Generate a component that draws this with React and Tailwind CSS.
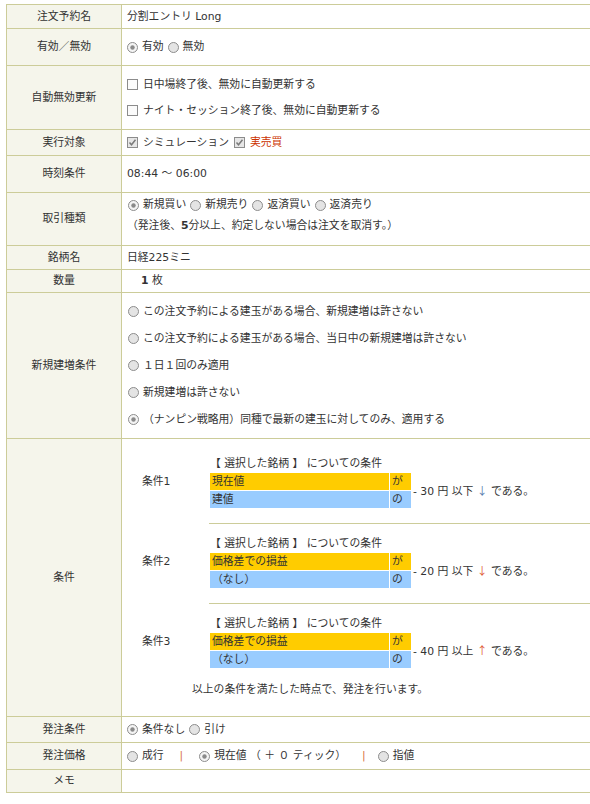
import React from "react";

const B = "border-[#cccc99]";

const Radio = ({ checked }) => (
  <svg width="11" height="11" viewBox="0 0 11 11" className="shrink-0">
    <circle cx="5.5" cy="5.5" r="5" fill={checked ? "#f4f4f4" : "#e4e4e4"} stroke="#8c8c8c" />
    {checked && <circle cx="5.5" cy="5.5" r="2.2" fill="#8a8a8a" />}
  </svg>
);

const Check = ({ checked }) => (
  <svg width="11" height="11" viewBox="0 0 11 11" className="shrink-0">
    <rect x="0.5" y="0.5" width="10" height="10" fill={checked ? "#e6e6e6" : "#fbfbfb"} stroke="#8c8c8c" />
    {checked && <path d="M2.5 5.5 L4.5 7.8 L8.5 2.8" fill="none" stroke="#7a7a7a" strokeWidth="1.5" />}
  </svg>
);

const Row = ({ label, h, className = "", children }) => (
  <div className={`flex border-b ${B} ${h}`}>
    <div className={`w-[115px] shrink-0 border-r ${B} bg-[#f5f5eb] flex items-center justify-center`}>
      {label}
    </div>
    <div className={`flex-1 pl-[5px] ${className}`}>{children}</div>
  </div>
);

const Cond = ({ name, top, field, base, amount, dir, arrow, arrowColor, last }) => (
  <div className="flex">
    <div className={`w-[87px] shrink-0 pl-[20px] flex items-center ${top} ${last ? "" : "pb-[15px]"}`}>
      {name}
    </div>
    <div className={`flex-1 ${top} ${last ? "" : `pb-[15px] border-b ${B}`}`}>
      <div className="h-[18px] leading-[18px] pl-[1px]">【 選択した銘柄 】 についての条件</div>
      <div className="flex items-center">
        <div className="grid grid-cols-[179px_21px] grid-rows-[17px_17px] gap-[1px] ml-[1px] leading-[17px]">
          <div className="bg-[#ffcc00] pl-[2px]">{field}</div>
          <div className="bg-[#ffcc00] pl-[2px]">が</div>
          <div className="bg-[#99ccff] pl-[2px]">{base}</div>
          <div className="bg-[#99ccff] pl-[2px]">の</div>
        </div>
        <div className="ml-[2px]">
          - {amount} 円 {dir}{" "}
          <span className="font-['Noto_Sans_CJK_JP',sans-serif]" style={{ color: arrowColor }}>
            {arrow}
          </span>{" "}
          である。
        </div>
      </div>
    </div>
  </div>
);

export default function App() {
  return (
    <div className="w-[590px] h-[804px] overflow-hidden bg-white pt-[4px] text-[10.8px] leading-[16px] text-[#333] font-['DejaVu_Sans','Noto_Sans_CJK_JP',sans-serif]">
      <div className={`ml-[6px] w-[640px] border-l border-t ${B}`}>
        <Row label="注文予約名" h="h-[24px]" className="flex items-center">
          分割エントリ Long
        </Row>
        <Row label="有効／無効" h="h-[37px]" className="flex items-center gap-[4px]">
          <Radio checked />
          <span>有効</span>
          <Radio />
          <span>無効</span>
        </Row>
        <Row label="自動無効更新" h="h-[64px]" className="flex flex-col justify-center gap-[10px]">
          <div className="flex items-center gap-[5px]">
            <Check />
            <span>日中場終了後、無効に自動更新する</span>
          </div>
          <div className="flex items-center gap-[5px]">
            <Check />
            <span>ナイト・セッション終了後、無効に自動更新する</span>
          </div>
        </Row>
        <Row label="実行対象" h="h-[26px]" className="flex items-center gap-[5px]">
          <Check checked />
          <span>シミュレーション</span>
          <Check checked />
          <span className="text-[#cc3300]">実売買</span>
        </Row>
        <Row label="時刻条件" h="h-[37px]" className="flex items-center">
          08:44 ～ 06:00
        </Row>
        <Row label="取引種類" h="h-[53px]" className="flex flex-col pt-[4px] gap-[5px]">
          <div className="flex items-center gap-[4px] pl-[1px]">
            <Radio checked />
            <span>新規買い</span>
            <Radio />
            <span>新規売り</span>
            <Radio />
            <span>返済買い</span>
            <Radio />
            <span>返済売り</span>
          </div>
          <div>
            （発注後、<b>5</b>分以上、約定しない場合は注文を取消す。）
          </div>
        </Row>
        <Row label="銘柄名" h="h-[24px]" className="flex items-center">
          日経225ミニ
        </Row>
        <Row label="数量" h="h-[23px]" className="flex items-center">
          <span className="pl-[14px]">
            <b>1</b> 枚
          </span>
        </Row>
        <Row label="新規建増条件" h="h-[146px]" className="flex flex-col justify-center gap-[11px]">
          {[
            "この注文予約による建玉がある場合、新規建増は許さない",
            "この注文予約による建玉がある場合、当日中の新規建増は許さない",
            "１日１回のみ適用",
            "新規建増は許さない",
            "（ナンピン戦略用）同種で最新の建玉に対してのみ、適用する",
          ].map((t, i) => (
            <div key={i} className="flex items-center gap-[4px] pl-[1px]">
              <Radio checked={i === 4} />
              <span>{t}</span>
            </div>
          ))}
        </Row>
        <Row label="条件" h="h-[278px]" className="!pl-0 flex flex-col">
          <Cond name="条件1" top="pt-[16px]" field="現在値" base="建値" amount="30" dir="以下" arrow="↓" arrowColor="#5a7cae" />
          <Cond name="条件2" top="pt-[11px]" field="価格差での損益" base="（なし）" amount="20" dir="以下" arrow="↓" arrowColor="#e0603a" />
          <Cond name="条件3" top="pt-[11px]" field="価格差での損益" base="（なし）" amount="40" dir="以上" arrow="↑" arrowColor="#e0603a" last />
          <div className="mt-[14px] pl-[70px]">以上の条件を満たした時点で、発注を行います。</div>
        </Row>
        <Row label="発注条件" h="h-[26px]" className="flex items-center gap-[4px]">
          <Radio checked />
          <span>条件なし</span>
          <Radio />
          <span>引け</span>
        </Row>
        <Row label="発注価格" h="h-[27px]" className="flex items-center">
          <Radio />
          <span className="ml-[4px]">成行</span>
          <span className="px-[16px] text-[#d8723e]">|</span>
          <Radio checked />
          <span className="ml-[4px]">現在値 （ ＋ ０ ティック）</span>
          <span className="pl-[16px] pr-[12px] text-[#d8723e]">|</span>
          <Radio />
          <span className="ml-[4px]">指値</span>
        </Row>
        <Row label="メモ" h="h-[23px]" />
      </div>
    </div>
  );
}
